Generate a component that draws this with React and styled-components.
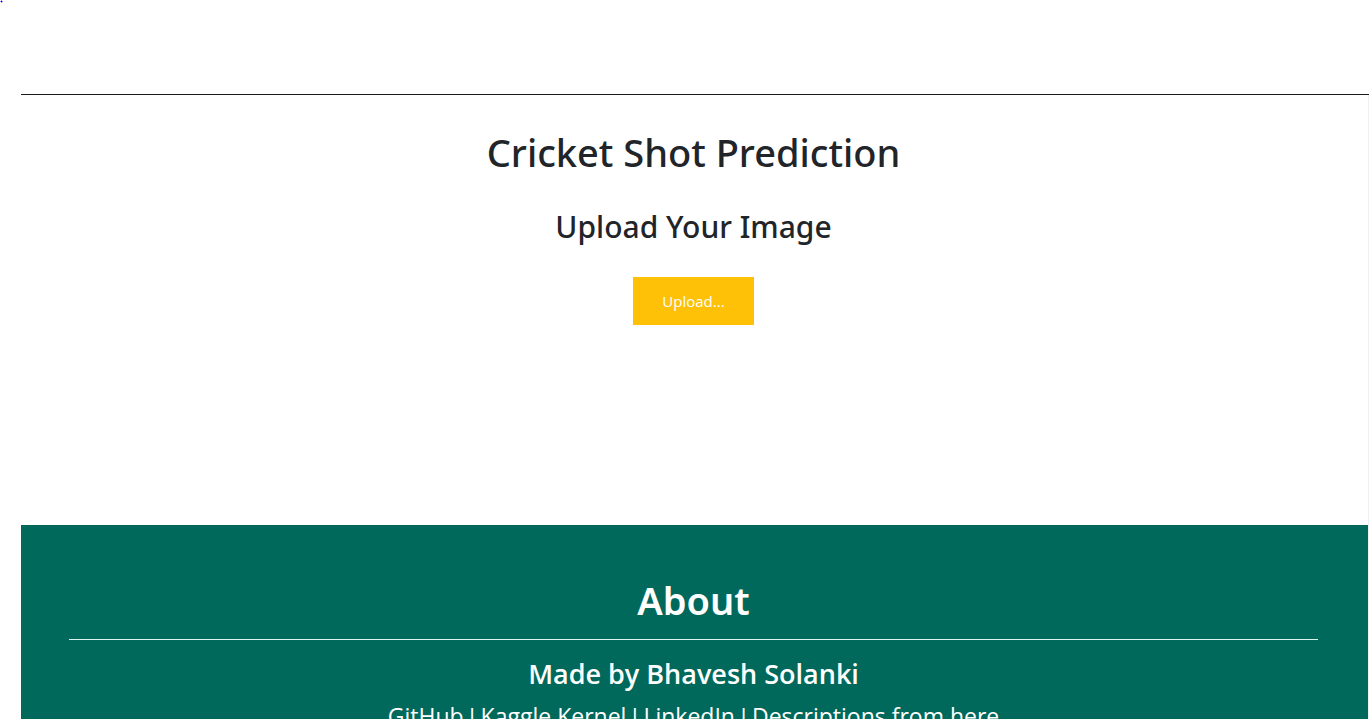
import React from "react";
import styled, { createGlobalStyle } from "styled-components";

const GlobalStyle = createGlobalStyle`
  *, *::before, *::after { box-sizing: border-box; }
  html { scrollbar-width: none; }
  body {
    margin: 0;
    background: #fff;
    color: #212529;
    font-family: "Open Sans", "Noto Sans", sans-serif;
    font-size: 16px;
    line-height: 24px;
  }
`;

const Page = styled.div`
  padding-left: 21px;
`;

const TopBar = styled.header`
  height: 95px;
  border-bottom: 1px solid #1b1b1b;
`;

const Speck = styled.svg`
  position: absolute;
  top: 0;
  left: 0;
`;

const Content = styled.div`
  border-right: 1px solid #f0f0f0;
`;

const UploadSection = styled.main`
  display: flex;
  flex-direction: column;
  align-items: center;
  min-height: 430px;
  padding: 33px 50px 34px 48px;
  text-align: center;
`;

const Title = styled.h1`
  margin: 0;
  font-family: "Noto Sans", sans-serif;
  font-size: 38px;
  font-weight: ${(p) => p.$weight || 500};
  line-height: 48px;
`;

const Subtitle = styled.h2`
  margin: 31px 0 30px;
  font-family: "Noto Sans", sans-serif;
  font-size: 30px;
  font-weight: 500;
  line-height: 40px;
`;

const UploadButton = styled.button`
  height: 48px;
  padding: 0 29px;
  border: 0;
  background: #ffc107;
  color: #fff;
  font: inherit;
  font-size: 15px;
  cursor: pointer;
`;

const About = styled.footer`
  padding: 51px 50px 48px 48px;
  background: #00695c;
  color: #fff;
  text-align: center;
`;

const Rule = styled.hr`
  margin: 15px 0 16px;
  border: 0;
  border-top: 1px solid #d9f5ee;
`;

const Author = styled.h3`
  margin: 0;
  font-size: 27px;
  font-weight: 600;
  line-height: 36px;
`;

const Links = styled.nav`
  margin-top: 6px;
  font-size: 23px;
  line-height: 36px;
`;

const FooterLink = styled.a`
  color: inherit;
  text-decoration: none;
`;

const Separator = styled.span`
  font-family: Roboto, sans-serif;
  white-space: pre;
`;

const links = [
  { label: "GitHub", href: "#github" },
  { label: "Kaggle Kernel", href: "#kaggle" },
  { label: "LinkedIn", href: "#linkedin" },
  { label: "Descriptions from here", href: "#descriptions" },
];

export default function App() {
  return (
    <>
      <GlobalStyle />
      <Page>
        <TopBar>
          <Speck width="3" height="3" viewBox="0 0 3 3" aria-hidden="true">
            <path d="M0 1h3v1H0zM1 0h1v3H1z" fill="#8c8cff" />
            <path d="M1 1h1v1H1z" fill="#0000a0" />
          </Speck>
        </TopBar>
        <Content>
          <UploadSection>
            <Title>Cricket Shot Prediction</Title>
            <Subtitle>Upload Your Image</Subtitle>
            <UploadButton type="button">Upload...</UploadButton>
          </UploadSection>
        </Content>
        <Content>
          <About>
            <Title as="h2" $weight={600}>About</Title>
            <Rule />
            <Author>Made by Bhavesh Solanki</Author>
            <Links aria-label="Project links">
              {links.map((link, i) => (
                <React.Fragment key={link.href}>
                  {i > 0 && <Separator> | </Separator>}
                  <FooterLink href={link.href}>{link.label}</FooterLink>
                </React.Fragment>
              ))}
            </Links>
          </About>
        </Content>
      </Page>
    </>
  );
}
